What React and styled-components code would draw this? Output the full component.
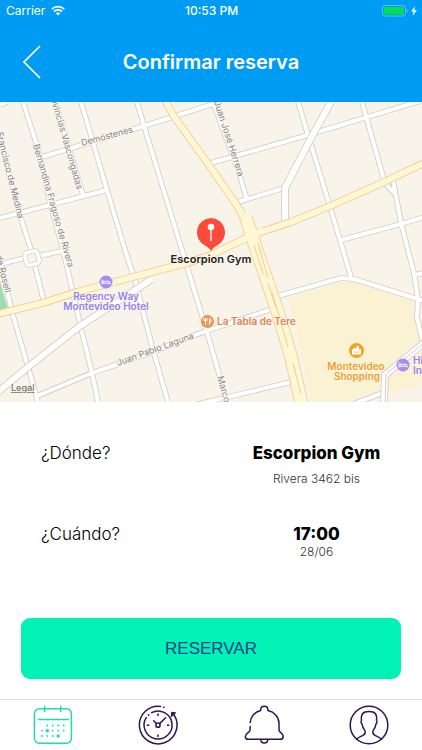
import React from 'react';
import styled, { createGlobalStyle } from 'styled-components';

const colors = {
  primary: '#009cf3',
  success: '#00f2b4',
  active: '#1fdcaa',
  navy: '#2a1a52',
  road: '#ffffff',
  roadEdge: '#d2cec9',
  avenue: '#fff8d2',
  avenueEdge: '#f9c898',
  hotel: '#9583ea',
  food: '#e08350',
  shop: '#f0a01e',
};

const GlobalStyle = createGlobalStyle`
  * {
    box-sizing: border-box;
  }

  body {
    margin: 0;

    background: #fff;
    color: #000;

    font-family: Inter, 'Liberation Sans', sans-serif;
  }
`;

const Screen = styled.div`
  display: flex;
  flex-direction: column;

  min-height: 100vh;
`;

const Header = styled.header`
  background: ${colors.primary};
  color: #fff;
`;

const StatusBar = styled.div`
  display: grid;
  grid-template-columns: 1fr auto 1fr;
  align-items: center;

  height: 21px;
  padding: 0 5px 0 6px;

  font-size: 12px;
`;

const StatusGroup = styled.div`
  display: flex;
  align-items: center;
  justify-content: ${(props) => (props.$end ? 'flex-end' : 'flex-start')};
  gap: ${(props) => (props.$end ? '3px' : '6px')};
`;

const Clock = styled.time`
  font-weight: 500;
`;

const Navbar = styled.div`
  display: grid;
  grid-template-columns: 64px 1fr 64px;
  align-items: center;

  height: 81px;
`;

const BackButton = styled.button`
  display: flex;
  align-items: center;
  justify-content: center;

  height: 48px;
  padding: 0;

  background: none;
  border: 0;
  color: inherit;
`;

const Title = styled.h1`
  margin: 0;

  font-size: 20px;
  font-weight: 600;
  text-align: center;
`;

const StyledMap = styled.svg`
  display: block;

  width: 100%;
  height: 300px;

  background: #f9f4ea;
`;

const StreetName = styled.text`
  fill: #85868a;
  stroke: #fbf8f1;
  stroke-width: 2px;
  paint-order: stroke;

  font-size: 9px;
`;

const PlaceName = styled.text`
  fill: ${(props) => props.$color};
  stroke: #fbf8f1;
  stroke-width: 1px;
  paint-order: stroke;

  font-size: ${(props) => (props.$large ? '11px' : '10px')};
  font-weight: 600;
  text-anchor: ${(props) => props.$anchor || 'middle'};
`;

const LegalText = styled.text`
  fill: #85837d;

  font-size: 9px;
  font-weight: 600;
  text-decoration: underline;
`;

const Details = styled.dl`
  display: flex;
  flex-direction: column;
  gap: 37px;

  margin: 0;
  padding: 41px 0 0;
`;

const DetailRow = styled.div`
  display: grid;
  grid-template-columns: 1fr 1fr;
`;

const Term = styled.dt`
  padding-left: 41px;

  font-size: 17px;
  line-height: 20px;
  font-weight: 300;
`;

const Description = styled.dd`
  display: flex;
  flex-direction: column;
  gap: ${(props) => (props.$spaced ? '8px' : '0')};

  margin: 0;

  text-align: center;
`;

const Value = styled.strong`
  font-size: 17px;
  line-height: 20px;
  font-weight: 800;
`;

const Note = styled.span`
  color: #333;

  font-size: 12px;
  line-height: 16px;
  font-weight: 300;
`;

const Actions = styled.div`
  padding: 58px 21px 20px;
`;

const ReserveButton = styled.button`
  display: block;

  width: 100%;
  height: 61px;

  background: ${colors.success};
  border: 0;
  border-radius: 9px;
  color: #18418a;

  font-family: 'Liberation Sans', sans-serif;
  font-size: 17px;
`;

const TabBar = styled.nav`
  display: grid;
  grid-template-columns: repeat(4, 1fr);

  height: 51px;
  margin-top: auto;

  border-top: 1px solid #e0e0e0;
`;

const Tab = styled.a`
  display: flex;
  align-items: center;
  justify-content: center;

  color: ${(props) => (props.$active ? colors.active : colors.navy)};
`;

const WifiIcon = () => (
  <svg width="14" height="11" viewBox="0 0 14 11" fill="none" stroke="currentColor" strokeWidth="1.8" aria-hidden="true">
    <path d="M.8 4.1a8.8 8.8 0 0 1 12.4 0" />
    <path d="M3 6.5a5.7 5.7 0 0 1 8 0" />
    <path d="M7 10.6 4.9 8.4a3 3 0 0 1 4.2 0Z" fill="currentColor" stroke="none" />
  </svg>
);

const BatteryIcon = () => (
  <svg width="26" height="12" viewBox="0 0 26 12" aria-hidden="true">
    <rect x=".5" y=".5" width="23" height="10.5" rx="2.5" fill="none" stroke="#55bdf2" />
    <rect x="2" y="2" width="20" height="7.5" rx="1" fill="#06dc55" />
    <path d="M24.7 4v3.5q1.2-.5 1.2-1.7T24.7 4Z" fill="#55bdf2" />
  </svg>
);

const BoltIcon = () => (
  <svg width="6" height="10" viewBox="0 0 6 10" fill="currentColor" aria-hidden="true">
    <path d="M3.8.3.2 5.5h2.2L1.8 9.7l4-5.5H3.4Z" />
  </svg>
);

const BackIcon = () => (
  <svg width="18" height="34" viewBox="0 0 18 34" fill="none" stroke="currentColor" strokeWidth="1.7" aria-hidden="true">
    <path d="M17 1 1 17l16 16" />
  </svg>
);

const iconProps = {
  width: 40,
  height: 40,
  viewBox: '0 0 40 40',
  fill: 'none',
  stroke: 'currentColor',
  strokeWidth: 1.5,
  strokeLinecap: 'round',
  strokeLinejoin: 'round',
  'aria-hidden': true,
};

const calendarDots = [
  [14.3, 20.5], [19.7, 20.5], [25.2, 20.5], [30.7, 20.5],
  [9, 25.7], [19.7, 25.7], [25.2, 25.7], [30.7, 25.7],
  [9, 31], [14.3, 31], [19.7, 31],
];

const CalendarIcon = () => (
  <svg {...iconProps}>
    <rect x="1.4" y="3.8" width="37" height="34.4" rx="5" />
    <path d="M11.7 1.2v5.2M27.8 1.2v5.2M5.4 14.4h30" />
    <g fill="currentColor" stroke="none">
      {calendarDots.map(([x, y]) => (
        <circle key={`${x}-${y}`} cx={x} cy={y} r=".9" />
      ))}
      <circle cx="14.3" cy="25.7" r="1.7" />
      <circle cx="25.2" cy="31" r="1.7" />
    </g>
  </svg>
);

const HistoryIcon = () => (
  <svg {...iconProps}>
    <path d="M22.5 1.4A18.8 18.8 0 1 0 35.4 9" />
    <path d="m33.4 11.4.2-4.2 3.8.6Z" fill="currentColor" strokeWidth="1" />
    <path d="M13.6 7.6A14 14 0 1 1 8.2 12.6" />
    <path d="M25.8 2.3h.1M10.6 9.9h.1" strokeWidth="1.7" />
    <circle cx="20" cy="20.2" r="2.1" />
    <path d="m18.4 18.6-2.7-2.9M21.6 18.6l6-5.8M20 9v1.5M20 30v1.5M9.4 20.2h1.4M29.4 20.2h1.4" />
  </svg>
);

const BellIcon = () => (
  <svg {...iconProps}>
    <path d="M6.2 17.6C6.4 11.7 10.6 7 16.7 5.6V4.7c0-2.2 1.4-3.5 3.6-3.5s3.6 1.3 3.6 3.5v.9C30.5 7.1 35 12 35 18.3v6.4c0 3.2 4.2 3.3 4.2 6.7 0 1.9-1.2 2.9-3 2.9H4.4c-1.9 0-3.1-1-3.1-2.9 0-3.4 4.8-3.6 4.8-6.7v-3.2" />
    <path d="M16.8 34.6c0 2.2 1.4 3.5 3.5 3.5s3.5-1.3 3.5-3.5" />
  </svg>
);

const ProfileIcon = () => (
  <svg {...iconProps}>
    <circle cx="20" cy="20" r="18.8" />
    <path d="M7.3 34.1c1.7-1.6 4.6-2.5 6.6-3.7 2.4-1.3 2.8-3.1 1.7-5.4-1.3-1.3-2.2-3.5-2.5-5.8-1.2-.9-1.3-2.8-.6-3.8C11.7 9.3 13.7 6.6 20 6.6s8.3 2.7 7.5 8.8c.7 1 .6 2.9-.6 3.8-.3 2.3-1.2 4.5-2.5 5.8-1.1 2.3-.7 4.1 1.7 5.4 2 1.2 4.9 2.1 6.6 3.7" />
  </svg>
);

const streets = [
  'M0 3 7 0',
  'M23 0 40 53 50 101 63 148 73 191 80 222 92 271 98 300',
  'M55 0 83 93',
  'M81 0 107 88 125 148 135 178 153 248 168 300',
  'M137 0 144 24 182 148 207 230 218 268 226 300',
  'M-2 30 20 113 31 148',
  'M0 162 25 156M39 154 62 149M35 164 44 200',
  'M0 158 12 210 28 265 38 300',
  'M42 55 144 24 213 2',
  'M0 116 107 88',
  'M37 294 92 271 150 251 203 230 269 208',
  'M190 304 228 295 291 280',
  'M211 61 308 33 364 16 420 -1',
  'M213 0 238 68 247 98',
  'M238 100 284 86',
  'M298 0 308 33 328 98 343 148 351 175',
  'M362 0 384 78M384 80 395 92M393 78 401 121 408 148 414 171 418 197 417 215 424 246',
  'M341 138 401 122 424 115',
  'M278 194 341 176 354 177 424 199',
  'M414 173 424 171',
  'M354 302 382 291',
];

const wideStreets = [
  'M-2 290 28 265 80 224 120 198 152 177',
  'M332 -2 311 36 285 86 285 120',
  'M424 241 385 273 384 302',
];

const avenues = [
  'M-2 212 43 201 77 190 133 175 187 161 211 153 244 137 258 131 291 120 328 105 384 80 424 61',
  'M165 -2 173 13 211 66 240 108 251 132',
];

const boulevard = 'M246 116 256 146 277 208 291 254 302 304';

const Road = ({ paths, width, fill, edge }) => (
  <g fill="none" strokeLinejoin="round">
    <path d={paths.join('')} stroke={edge} strokeWidth={width + 1.7} />
    <path d={paths.join('')} stroke={fill} strokeWidth={width} />
  </g>
);

const BedGlyph = ({ x, y }) => (
  <g transform={`translate(${x} ${y})`}>
    <circle r="6.5" fill="#a18ff2" />
    <path d="M-4-2.5v5M-4 1.2h8v1.3M-.8-.7h3.6q1.2 0 1.2 1.9" fill="none" stroke="#fff" />
    <circle cx="-2.3" cy="-.6" r="1" fill="#fff" />
  </g>
);

const Map = () => (
  <StyledMap viewBox="0 0 422 300" preserveAspectRatio="xMidYMid slice" role="group" aria-label="Mapa">
    <path d="M0 179 8 207 0 209Z" fill="#9fdcb5" />
    <path d="M288 196 341 180 356 180 413 199 414 216 419 239 383 269 380 287 350 300H311L297 232Z" fill="#fbf1d3" />
    <path d="M388 276 422 249V283L388 292Z" fill="#fbf1d3" />

    <Road paths={streets} width={4} fill={colors.road} edge={colors.roadEdge} />
    <Road paths={wideStreets} width={6} fill={colors.road} edge={colors.roadEdge} />
    <path d="M386 272 385 302M387 271 424 241" fill="none" stroke={colors.roadEdge} />
    <g transform="translate(32 156) rotate(-14)">
      <rect x="-6.500" y="-6.500" width="13" height="13" rx="3" fill="#f9f4ea" stroke={colors.roadEdge} strokeWidth="5" />
      <rect x="-6.500" y="-6.500" width="13" height="13" rx="3" fill="none" stroke={colors.road} strokeWidth="3.500" />
    </g>
    <Road paths={avenues} width={6} fill={colors.avenue} edge={colors.avenueEdge} />
    <Road paths={[boulevard]} width={12} fill={colors.avenue} edge={colors.avenueEdge} />
    <path d="M238 140 264 128M243 112 248 122" stroke={colors.avenue} strokeWidth="6" />
    <path d="M254 143 263 172M258 141 268 176M268 181 276 206M272 190 288 245M293 261 301 292" fill="none" stroke={colors.avenueEdge} />

    <StreetName transform="translate(82 44) rotate(-15)">Demóstenes</StreetName>
    <StreetName transform="translate(33 43) rotate(74)">Bernandina Fragoso de Rivera</StreetName>
    <StreetName transform="translate(18 117) rotate(76)" textAnchor="end">Francisco de Medina</StreetName>
    <StreetName transform="translate(77 88) rotate(74)" textAnchor="end">Provincias Vascongadas</StreetName>
    <StreetName transform="translate(214 0) rotate(72)">Juan José Herrera</StreetName>
    <StreetName transform="translate(5 191) rotate(76)" textAnchor="end">de Rosell</StreetName>
    <StreetName transform="translate(118 264) rotate(-20)">Juan Pablo Laguna</StreetName>
    <StreetName transform="translate(217 275) rotate(74)">Marco</StreetName>

    <BedGlyph x={106} y={180} />
    <PlaceName $color={colors.hotel} x="106" y="198">Regency Way</PlaceName>
    <PlaceName $color={colors.hotel} x="106" y="208">Montevideo Hotel</PlaceName>

    <circle cx="207.500" cy="219.500" r="6.500" fill="#f0954f" />
    <path d="M205.500 216v7M204 216v2.500h3V216M209.500 223v-7q1.500 1 1.500 4h-1.500" fill="none" stroke="#fff" />
    <PlaceName $color={colors.food} $anchor="start" x="217" y="223">La Tabla de Tere</PlaceName>

    <circle cx="356.500" cy="248.500" r="7.500" fill="#f5a31a" />
    <path d="M352 252.500v-5h1.500v-1.500h3V244h2.500v3h2v5.500Z" fill="#fff" />
    <path d="M354 250h5" stroke="#f5a31a" strokeDasharray="1 1" />
    <PlaceName $color={colors.shop} x="356" y="268">Montevideo</PlaceName>
    <PlaceName $color={colors.shop} x="357" y="278">Shopping</PlaceName>

    <BedGlyph x={403} y={263} />
    <PlaceName $color={colors.hotel} $anchor="start" x="413" y="262">Hi</PlaceName>
    <PlaceName $color={colors.hotel} $anchor="start" x="413" y="272">In</PlaceName>

    <path d="M211 116a14.500 14.500 0 0 1 6 27.500q-4 2-6 5.500-2-3.500-6-5.500a14.500 14.500 0 0 1 6-27.500Z" fill="#fc4b3a" />
    <circle cx="211" cy="125" r="3.300" fill="#fff" />
    <path d="M211 127v12" stroke="#fff" strokeWidth="1.300" />
    <PlaceName $color="#222" $large x="211" y="161">Escorpion Gym</PlaceName>

    <a href="#legal">
      <LegalText x="11" y="289">Legal</LegalText>
    </a>
  </StyledMap>
);

const tabs = [
  { id: 'reservas', label: 'Reservas', icon: CalendarIcon, active: true },
  { id: 'historial', label: 'Historial', icon: HistoryIcon },
  { id: 'avisos', label: 'Avisos', icon: BellIcon },
  { id: 'perfil', label: 'Perfil', icon: ProfileIcon },
];

const App = () => (
  <Screen>
    <GlobalStyle />
    <Header>
      <StatusBar>
        <StatusGroup>
          Carrier
          <WifiIcon />
        </StatusGroup>
        <Clock>10:53 PM</Clock>
        <StatusGroup $end>
          <BatteryIcon />
          <BoltIcon />
        </StatusGroup>
      </StatusBar>
      <Navbar>
        <BackButton type="button" aria-label="Volver">
          <BackIcon />
        </BackButton>
        <Title>Confirmar reserva</Title>
      </Navbar>
    </Header>

    <main>
      <Map />
      <Details>
        <DetailRow>
          <Term>¿Dónde?</Term>
          <Description $spaced>
            <Value>Escorpion Gym</Value>
            <Note>Rivera 3462 bis</Note>
          </Description>
        </DetailRow>
        <DetailRow>
          <Term>¿Cuándo?</Term>
          <Description>
            <Value>17:00</Value>
            <Note>28/06</Note>
          </Description>
        </DetailRow>
      </Details>
      <Actions>
        <ReserveButton type="button">RESERVAR</ReserveButton>
      </Actions>
    </main>

    <TabBar>
      {tabs.map(({ id, label, icon: Icon, active }) => (
        <Tab key={id} href={`#${id}`} aria-label={label} $active={active}>
          <Icon />
        </Tab>
      ))}
    </TabBar>
  </Screen>
);

export default App;
